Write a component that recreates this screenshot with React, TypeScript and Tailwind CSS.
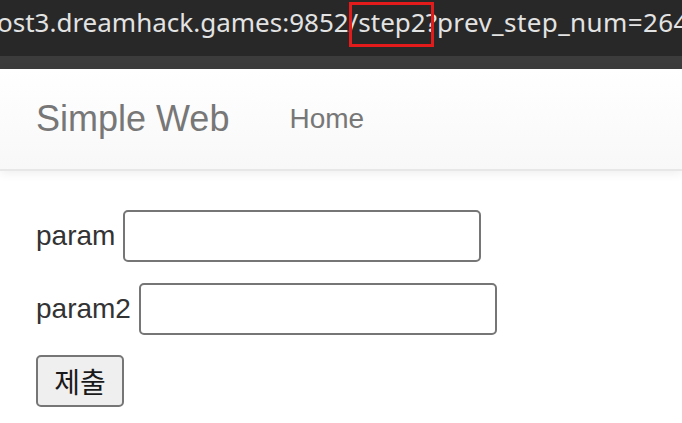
import React from "react";

export default function App() {
  return (
    <div className="w-[682px] h-[423px] overflow-hidden bg-white relative">
      {/* address bar */}
      <div className="h-[56px] bg-[#282828] overflow-hidden relative">
        <div
          className="whitespace-nowrap text-[26px] text-[#e3e3e3] ml-[-3px] pt-[4px] leading-[36px]"
          style={{ fontFamily: '"Noto Sans", "Open Sans", sans-serif' }}
        >
          ost3.dreamhack.games:9852/step2?<span className="tracking-[0.4px]">prev_step_num=264</span>
        </div>
        <div className="absolute left-[349px] top-[2px] w-[85px] h-[45px] border-[3px] border-[#e31b1b]" />
      </div>
      <div className="h-[13px] bg-[#3c3c3c]" />
      {/* navbar */}
      <div className="h-[102px] bg-gradient-to-b from-white to-[#f8f8f8] border-b-2 border-[#e7e7e7] shadow-[0_2px_10px_rgba(0,0,0,0.075)] flex items-center pl-[36px]"
        style={{ fontFamily: '"Liberation Sans", Arial, sans-serif' }}>
        <span className="text-[36px] text-[#777] leading-none">Simple Web</span>
        <span className="text-[28px] text-[#777] leading-none ml-[60px]">Home</span>
      </div>
      {/* form */}
      <div className="pl-[36px] pt-[39px] flex flex-col text-[28px] text-[#333]"
        style={{ fontFamily: '"Liberation Sans", Arial, sans-serif' }}>
        <div className="flex items-center h-[52px]">
          <span className="leading-none">param</span>
          <input className="ml-[8px] w-[358px] h-[52px] border-2 border-[#767676] rounded-[5px] bg-white" />
        </div>
        <div className="flex items-center h-[52px] mt-[21px]">
          <span className="leading-none">param2</span>
          <input className="ml-[8px] w-[358px] h-[52px] border-2 border-[#767676] rounded-[5px] bg-white" />
        </div>
        <div className="mt-[20px]">
          <button
            className="w-[88px] h-[52px] border-2 border-[#767676] rounded-[5px] bg-[#efefef] text-[28px] text-[#1a1a1a] flex items-center justify-center"
            style={{ fontFamily: '"Noto Sans CJK KR", sans-serif' }}
          >
            제출
          </button>
        </div>
      </div>
    </div>
  );
}
